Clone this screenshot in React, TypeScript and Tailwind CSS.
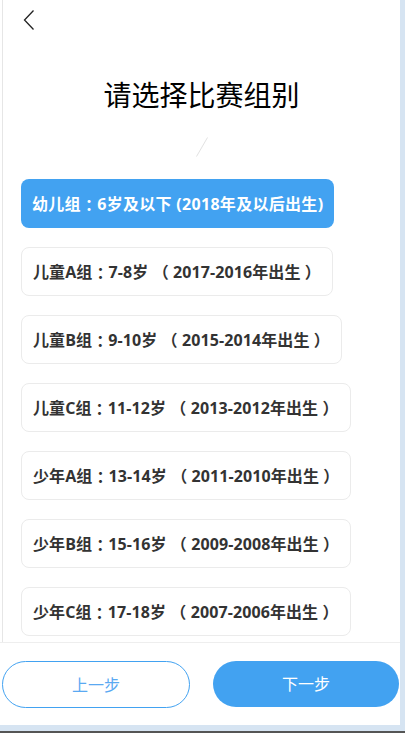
const groups = [
  '幼儿组：6岁及以下 (2018年及以后出生)',
  '儿童A组：7-8岁 （ 2017-2016年出生 ）',
  '儿童B组：9-10岁 （ 2015-2014年出生 ）',
  '儿童C组：11-12岁 （ 2013-2012年出生 ）',
  '少年A组：13-14岁 （ 2011-2010年出生 ）',
  '少年B组：15-16岁 （ 2009-2008年出生 ）',
  '少年C组：17-18岁 （ 2007-2006年出生 ）',
];

// centred full-width colon, as in the original font
function Label({ text }: { text: string }) {
  const [head, tail] = text.split('：');
  return (
    <>
      {head}
      <span className="font-['Noto_Sans_CJK_TC']">：</span>
      {tail}
    </>
  );
}

export default function App() {
  const selected = 0;

  return (
    <div
      className="flex h-[733px] w-[405px] flex-col overflow-hidden bg-[#d6e4f2]"
      style={{ fontFamily: '"Open Sans", "Noto Sans CJK SC", sans-serif' }}
    >
      {/* Page */}
      <div className="flex h-[725px] w-[400px] flex-col bg-white">
        {/* Scroll area */}
        <div className="ml-[2px] flex h-[642px] flex-col overflow-hidden border-l border-[#e6e6e6]">
          {/* Header */}
          <div className="h-[75px] pl-[19px] pt-[9px]">
            <svg width="14" height="22" viewBox="0 0 14 22" fill="none" className="text-[#222]">
              <path d="M11.5 1.5 L2.5 11 L11.5 20.5" stroke="currentColor" strokeWidth="1.3" />
            </svg>
          </div>

          <h1 className="h-[40px] text-center text-[28px] font-normal leading-[40px] text-black">
            请选择比赛组别
          </h1>

          {/* Decorative slash */}
          <div className="mt-[22px] flex justify-center">
            <svg width="14" height="20" viewBox="0 0 14 20">
              <path d="M12.5 0.5 L1.5 19.5" stroke="#e2e2e2" strokeWidth="1" />
            </svg>
          </div>

          {/* Groups */}
          <div className="mt-[22px] flex flex-col items-start gap-[19px] pl-[18px]">
            {groups.map((g, i) =>
              i === selected ? (
                <button
                  key={g}
                  type="button"
                  className="flex h-[49px] items-center rounded-lg bg-[#42a2f1] px-[11px] text-[16px] font-bold tracking-[0.3px] whitespace-nowrap text-white"
                >
                  <Label text={g} />
                </button>
              ) : (
                <button
                  key={g}
                  type="button"
                  className="flex h-[49px] items-center rounded-lg border border-[#ebebeb] bg-white px-[11px] text-[16px] font-bold tracking-[0.1px] whitespace-nowrap text-[#333]"
                >
                  <Label text={g} />
                </button>
              ),
            )}
          </div>
        </div>

        {/* Footer */}
        <div className="flex flex-1 gap-[23px] border-t border-[#eeeeee] pl-[2px] pr-[1px] pt-[18px]">
          <button
            type="button"
            className="h-[47px] w-[188px] rounded-full border border-[#42a2f1] text-[16px] text-[#5aa9f2]"
          >
            上一步
          </button>
          <button
            type="button"
            className="h-[46px] w-[186px] rounded-full bg-[#42a2f1] text-[16px] text-white"
          >
            下一步
          </button>
        </div>
      </div>
      <div className="h-[6px]" />
      <div className="h-[2px] bg-[#555]" />
    </div>
  );
}
